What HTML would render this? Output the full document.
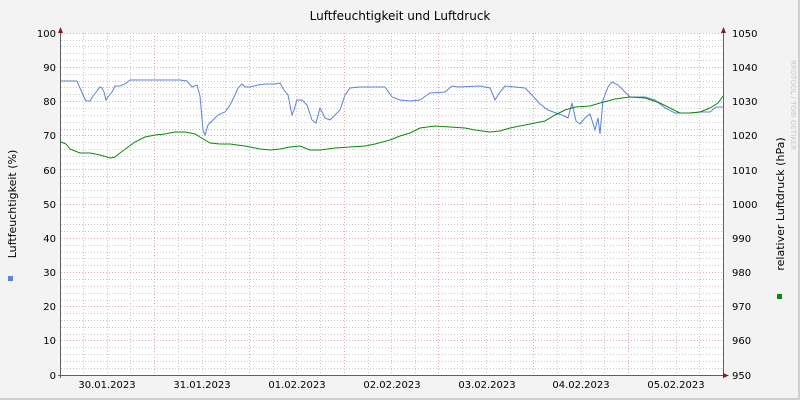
<!DOCTYPE html>
<html><head><style>body{margin:0}svg{display:block}text{font-family:"DejaVu Sans","Liberation Sans",sans-serif}</style></head>
<body>
<svg width="800" height="400" xmlns="http://www.w3.org/2000/svg">
<rect width="800" height="400" fill="#d0d0d0"/>
<rect x="0" y="0" width="798" height="398" fill="#f3f3f3"/>
<rect x="2" y="2" width="796" height="396" fill="#f3f3f3"/>
<rect x="61" y="33" width="662" height="342" fill="#ffffff"/>
<g stroke="#c8c8c8" stroke-width="1" stroke-dasharray="1,2" shape-rendering="crispEdges">
<path id="minh" d="M61 368.5H723M61 361.5H723M61 354.5H723M61 347.5H723M61 334.5H723M61 327.5H723M61 320.5H723M61 313.5H723M61 300.5H723M61 293.5H723M61 286.5H723M61 279.5H723M61 265.5H723M61 258.5H723M61 252.5H723M61 245.5H723M61 231.5H723M61 224.5H723M61 217.5H723M61 211.5H723M61 197.5H723M61 190.5H723M61 183.5H723M61 176.5H723M61 163.5H723M61 156.5H723M61 149.5H723M61 142.5H723M61 129.5H723M61 122.5H723M61 115.5H723M61 108.5H723M61 94.5H723M61 87.5H723M61 81.5H723M61 74.5H723M61 60.5H723M61 53.5H723M61 46.5H723M61 40.5H723"/>
<path d="M83.5 33V375M107.5 33V375M130.5 33V375M178.5 33V375M202.5 33V375M225.5 33V375M273.5 33V375M296.5 33V375M320.5 33V375M368.5 33V375M391.5 33V375M415.5 33V375M462.5 33V375M486.5 33V375M510.5 33V375M557.5 33V375M581.5 33V375M604.5 33V375M652.5 33V375M676.5 33V375M699.5 33V375"/>
</g>
<g stroke="#e8a8a8" stroke-width="1" stroke-dasharray="1,2" shape-rendering="crispEdges">
<path d="M61 340.5H723M61 306.5H723M61 272.5H723M61 238.5H723M61 204.5H723M61 169.5H723M61 135.5H723M61 101.5H723M61 67.5H723M61 33.5H723"/>
<path d="M154.5 33V375M249.5 33V375M344.5 33V375M438.5 33V375M533.5 33V375M628.5 33V375"/>
</g>
<polyline fill="none" stroke="#5b80e0" stroke-width="1" points="61,81 77,81 80,88 84,97 86,101 90,101 93,96 97,91 100,87 102,88 104,92 106,100 108,97 112,92 115,86 120,86 125,84 130,80 135,80 180,80 187,81 192,87 197,85 200,96 203,130 205,135 208,125 213,120 218,115 225,112 230,105 235,95 238,88 242,84 245,87 250,87 258,85 265,84 275,84 280,83 284,90 288,95 292,115 294,110 297,100 302,100 307,105 312,120 316,123 320,108 325,118 330,120 340,110 345,95 350,88 360,87 385,87 392,97 400,100 410,101 420,100 430,93 445,92 452,86 458,87 480,86 490,88 495,100 500,92 505,86 515,87 525,88 530,93 540,104 548,110 556,113 562,115 568,118 572,103 576,121 580,124 585,118 590,114 595,130 598,118 600,134 603,100 608,87 612,82 618,85 625,92 630,97 645,97 655,100 665,108 675,113 690,113 700,112 710,112 716,107 723,107"/>
<polyline fill="none" stroke="#0a8a0a" stroke-width="1" points="61,142 66,144 70,149 75,151 80,153 90,153 100,155 110,158 115,157 120,153 128,147 135,142 145,137 155,135 165,134 175,132 185,132 195,134 200,137 210,143 220,144 230,144 245,146 260,149 270,150 280,149 290,147 300,146 310,150 320,150 335,148 350,147 365,146 375,144 390,140 400,136 410,133 420,128 435,126 450,127 465,128 475,130 490,132 500,131 510,128 520,126 535,123 545,121 555,115 565,110 575,107 590,106 600,103 615,99 630,97 645,98 660,103 670,108 680,113 690,113 700,112 710,108 718,103 723,96"/>
<g stroke="#606060" stroke-width="1" shape-rendering="crispEdges">
<path d="M60.5 30V378M723.5 30V378M58 375.5H727"/>
</g>
<path d="M58 33L63 33L60.5 27Z" fill="#8b1a1a"/>
<path d="M721 33L726 33L723.5 27Z" fill="#8b1a1a"/>
<path d="M723 373L723 378L729 375.5Z" fill="#8b1a1a"/>
<g font-size="10" fill="#000" text-anchor="end">
<text x="56" y="37">100</text><text x="56" y="71">90</text><text x="56" y="105">80</text><text x="56" y="139">70</text><text x="56" y="174">60</text><text x="56" y="208">50</text><text x="56" y="242">40</text><text x="56" y="276">30</text><text x="56" y="310">20</text><text x="56" y="344">10</text><text x="56" y="379">0</text>
</g>
<g font-size="10" fill="#000">
<text x="732" y="37">1050</text><text x="732" y="71">1040</text><text x="732" y="105">1030</text><text x="732" y="139">1020</text><text x="732" y="174">1010</text><text x="732" y="208">1000</text><text x="732" y="242">990</text><text x="732" y="276">980</text><text x="732" y="310">970</text><text x="732" y="344">960</text><text x="732" y="379">950</text>
</g>
<g font-size="10" fill="#000" text-anchor="middle">
<text x="107" y="388">30.01.2023</text><text x="202" y="388">31.01.2023</text><text x="297" y="388">01.02.2023</text><text x="392" y="388">02.02.2023</text><text x="487" y="388">03.02.2023</text><text x="581" y="388">04.02.2023</text><text x="676" y="388">05.02.2023</text>
</g>
<text x="400" y="20" font-size="12" text-anchor="middle" fill="#000">Luftfeuchtigkeit und Luftdruck</text>
<text transform="translate(16,204) rotate(-90)" font-size="11" text-anchor="middle" fill="#000">Luftfeuchtigkeit (%)</text>
<text transform="translate(784,204) rotate(-90)" font-size="11" text-anchor="middle" fill="#000">relativer Luftdruck (hPa)</text>
<text transform="translate(791,60) rotate(90)" font-size="7" fill="#c8c8c8">RRDTOOL / TOBI OETIKER</text>
<rect x="8" y="276" width="5" height="5" fill="#5b80e0"/>
<rect x="777" y="294" width="5" height="5" fill="#0a8a0a"/>
</svg>
</body></html>
